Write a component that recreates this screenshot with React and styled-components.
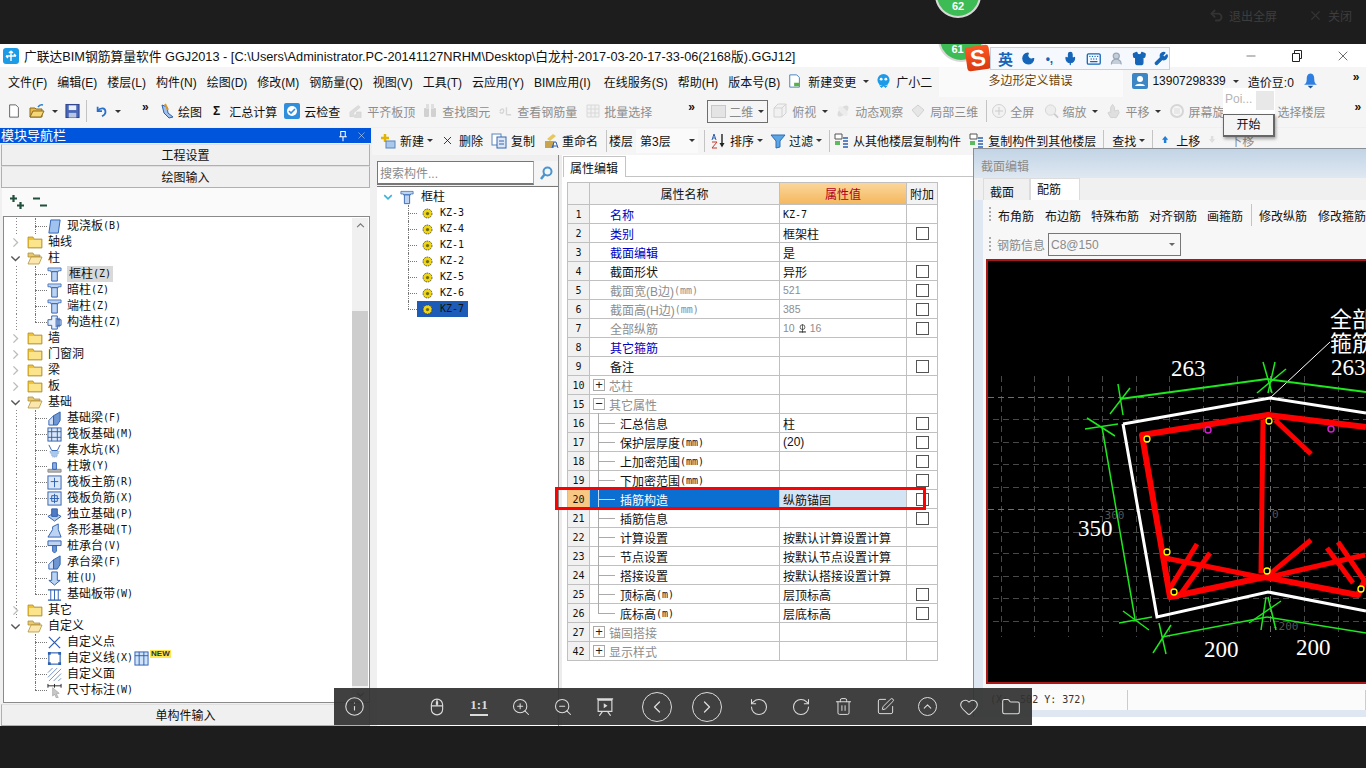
import React from 'react';
import styled, { createGlobalStyle } from 'styled-components';
import {
  Info, ZoomIn, ZoomOut, ChevronLeft, ChevronRight, RotateCcw, RotateCw,
  Trash2, SquarePen, ChevronUp, Heart, Folder as FolderLine, Moon, Mic, Keyboard, Shirt, Wrench,
  Minus, X, Undo2, UserRound,
} from 'lucide-react';

const UI = `"Liberation Sans", "Noto Sans CJK SC", sans-serif`;
const BITMAP = `"DejaVu Sans Mono", "Noto Sans CJK SC", monospace`;

const Global = createGlobalStyle`
  html, body { margin: 0; background: #1d1d1d; overflow: hidden; }
  body { font-family: ${UI}; font-size: 12px; color: #111; }
  * { box-sizing: border-box; }
`;

const Page = styled.div`
  width: 1366px;
  height: 768px;
  display: flex;
  flex-direction: column;
  position: relative;
  overflow: hidden;
`;

const TopBar = styled.div`
  height: 44px;
  flex: none;
  display: flex;
  align-items: center;
  justify-content: flex-end;
  padding: 0 14px 14px 0;
  color: #3d3d3d;
  gap: 5px;
`;

const Ball = styled.div`
  position: absolute;
  left: ${p => p.$x - 23}px;
  top: ${p => p.$y - 23}px;
  width: 46px;
  height: 46px;
  border-radius: 50%;
  background: #3dbb55;
  border: 2px solid #d8d8d8;
  color: #fff;
  font-weight: bold;
  font-size: 11px;
  text-align: center;
  padding-top: ${p => p.$pad}px;
  padding-right: ${p => p.$pr || 0}px;
`;

const Window = styled.div`
  height: 682px;
  flex: none;
  background: #f0f0f0;
  position: relative;
  overflow: hidden;
  display: flex;
  flex-direction: column;
`;

const TitleBar = styled.div`
  height: 23px;
  flex: none;
  background: #fff;
  display: flex;
  align-items: center;
  padding-left: 3px;
  font-size: 12.75px;
  white-space: nowrap;
`;

const TitleText = styled.span`
  margin-left: 5px;
  flex: 1;
`;

const WinBtn = styled.span`
  width: 46px;
  display: flex;
  justify-content: center;
  color: #222;
`;

const Menu = styled.div`
  height: 30px;
  flex: none;
  background: #f5f5f5;
  display: flex;
  align-items: center;
  padding: 0 0 2px 8px;
  white-space: nowrap;
`;

const Bar = styled.div`
  height: ${p => p.$h}px;
  flex: none;
  background: #f5f5f5;
  display: flex;
  align-items: center;
  white-space: nowrap;
  padding-left: ${p => p.$pad || 0}px;
  padding-bottom: ${p => p.$lift || 0}px;
`;

const Item = styled.span`
  display: inline-flex;
  align-items: center;
  flex: none;
  margin-left: ${p => p.$ml || 0}px;
  gap: ${p => p.$gap ?? 4}px;
  color: ${p => (p.$off ? '#8d8d8d' : '#111')};
`;

const Caret = styled.i`
  flex: none;
  width: 0;
  height: 0;
  margin-left: ${p => p.$ml || 0}px;
  margin-right: ${p => p.$mr || 0}px;
  border: 3px solid transparent;
  border-top: 3px solid ${p => p.$c || '#333'};
  border-bottom: 0;
`;

const Sep = styled.i`
  flex: none;
  width: 1px;
  height: 22px;
  background: #c4c4c4;
  margin-left: ${p => p.$ml || 0}px;
`;

const More = styled.b`
  flex: none;
  width: 8px;
  font-size: 12px;
  line-height: 8px;
  margin: -8px 0 0 ${p => p.$ml || 0}px;
`;

const Notice = styled.span`
  width: 184px;
  height: 30px;
  line-height: 28px;
  margin: 0 0 -2px 7px;
  padding-left: 49px;
  background: #fafafa;
  color: #6e4308;
`;

const ModeSelect = styled.span`
  width: 61px;
  height: 23px;
  flex: none;
  margin-left: ${p => p.$ml}px;
  border: 1px solid #6e6e6e;
  display: flex;
  align-items: center;
  padding-left: 3px;
  gap: 3px;
  color: #8a8a8a;
`;

const ModeSwatch = styled.i`
  width: 15px;
  height: 13px;
  background: #e4e4e4;
  border: 1px solid #c8c8c8;
`;

const Body = styled.div`
  flex: 1;
  min-height: 0;
  display: flex;
`;

const Nav = styled.div`
  width: 372px;
  flex: none;
  padding-top: 1px;
  display: flex;
  flex-direction: column;
`;

const NavHead = styled.div`
  height: 15px;
  flex: none;
  background: #0055dd;
  color: #fff;
  font-size: 13px;
  line-height: 14px;
  padding-left: 1px;
  display: flex;
  align-items: center;
  justify-content: space-between;
  padding-right: 4px;
  margin-right: 1px;
`;

const NavHeadTools = styled.span`
  display: flex;
  gap: 7px;
  align-items: center;
  color: #fff;
`;

const NavBtn = styled.div`
  height: 22px;
  flex: none;
  margin: ${p => p.$top || 0}px 2px 0 1px;
  background: #f0f0f0;
  border: 1px solid #b0b0b0;
  border-top-color: #e0e0e0;
  text-align: center;
  line-height: 22px;
`;

const NavTools = styled.div`
  height: 28px;
  flex: none;
  display: flex;
  align-items: center;
  gap: 7px;
  padding-left: 7px;
  background: #fafafa;
  margin: 0 2px;
`;

const NavTreeBox = styled.div`
  flex: 1;
  min-height: 0;
  margin: 0 2px 1px 3px;
  background: #fff;
  border: 1px solid #8a8a8a;
  position: relative;
  padding-top: 1px;
  display: flex;
`;

const TreeList = styled.div`
  flex: 1;
  min-width: 0;
`;

const Scroll = styled.div`
  width: 16px;
  flex: none;
  margin-right: 1px;
  background: linear-gradient(#f0f0f0 93px, #cdcdcd 93px, #cdcdcd 468px, #f0f0f0 468px);
  display: flex;
  flex-direction: column;
  justify-content: space-between;
  align-items: center;
  color: #555;
  padding: 3px 0;
`;

/* tree row: the dotted guides are decoration over the row */
const Row = styled.div`
  height: 16px;
  display: flex;
  align-items: center;
  position: relative;
  padding-left: ${p => p.$indent}px;
  white-space: nowrap;
  ${p => p.$trunk && `
    background: repeating-linear-gradient(#888 0 1px, transparent 1px 3px) 12px 0 / 1px 100% no-repeat;
  `}
  ${p => p.$guide !== undefined && `
    &::before {
      content: '';
      position: absolute;
      left: ${p.$guide}px;
      top: 0;
      height: ${p.$last ? '50%' : '100%'};
      border-left: 1px dotted #777;
    }
    &::after {
      content: '';
      position: absolute;
      left: ${p.$guide}px;
      top: 8px;
      width: ${p.$indent - p.$guide}px;
      border-top: 1px dotted #777;
    }
  `}
`;

const Label = styled.span`
  margin-left: ${p => p.$ml ?? 5}px;
  padding: 0 ${p => (p.$pill ? 2 : 0)}px;
  background: ${p => (p.$pill ? p.$pill : 'none')};
  line-height: 16px;
  display: inline-flex;
  align-items: center;
`;

const Picked = styled.span`
  width: 51px;
  height: 16px;
  padding-left: 4px;
  display: flex;
  align-items: center;
  background: ${p => (p.$on ? '#1c5cb8' : 'none')};
`;

const Code = styled.span`
  font-family: ${BITMAP};
  font-size: 10px;
`;

const Twist = styled.span`
  width: 12px;
  margin-right: 6px;
  display: flex;
  justify-content: center;
  color: #999;
`;

const NewTag = styled.span`
  font-size: 8px;
  font-weight: bold;
  line-height: 8px;
  background: #ffe64d;
  color: #234;
  padding: 0 1px;
  margin: -8px 0 0 1px;
`;

const Main = styled.div`
  flex: 1;
  min-width: 0;
  position: relative;
  padding-top: 1px;
  display: flex;
  flex-direction: column;
`;

const FloorSelect = styled.span`
  width: 62px;
  height: 24px;
  flex: none;
  margin-left: 3px;
  background: #fafafa;
  display: flex;
  align-items: center;
  justify-content: space-between;
  padding: 0 3px 0 4px;
`;

const Panels = styled.div`
  flex: 1;
  min-height: 0;
  display: flex;
  background: #fff;
`;

const ListPane = styled.div`
  width: 187px;
  flex: none;
  background: #f0f0f0;
  border-right: 1px solid #888;
  padding: 6px 0 0 5px;
  display: flex;
  flex-direction: column;
`;

const SearchRow = styled.div`
  height: 24px;
  flex: none;
  display: flex;
`;

const SearchInput = styled.div`
  width: 157px;
  background: #fff;
  border: 1px solid #777;
  border-right-color: #aaa;
  border-bottom-width: 2px;
  color: #8a8a8a;
  padding: 2px 0 0 2px;
`;

const SearchBtn = styled.div`
  flex: 1;
  display: flex;
  align-items: center;
  justify-content: center;
  background: #f5f5f5;
`;

const ListTree = styled.div`
  flex: 1;
  background: #fff;
  margin-top: 1px;
  border-top: 1px solid #777;
  padding-top: 2px;
`;

const PropPane = styled.div`
  flex: 1;
  min-width: 0;
  padding: 1px 0 0 1px;
  border-left: 3px solid #ececec;
  display: flex;
  flex-direction: column;
`;

const TabStrip = styled.div`
  height: 21px;
  flex: none;
  border-bottom: 1px solid #c4c4c4;
  display: flex;
`;

const PropTab = styled.div`
  width: 63px;
  height: 21px;
  background: #fff;
  border: 1px solid #c4c4c4;
  border-bottom: 0;
  padding: 2px 0 0 6px;
`;

const Table = styled.div`
  width: 371px;
  margin: 5px 0 0 4px;
  position: relative;
  display: grid;
  grid-template-columns: 22px 190px 127px 31px;
  grid-template-rows: 22px;
  grid-auto-rows: 19px;
  border-top: 1px solid #c0c0c0;
  border-left: 1px solid #c0c0c0;
`;

const Cell = styled.div`
  position: relative;
  border-right: 1px solid #c0c0c0;
  border-bottom: 1px solid #c0c0c0;
  display: flex;
  align-items: center;
  white-space: nowrap;
  min-width: 0;
`;

const HeadCell = styled(Cell)`
  justify-content: center;
  background: ${p => (p.$hot ? 'linear-gradient(#fbd79b, #f4b75f)' : '#f3f3f3')};
  color: ${p => (p.$hot ? '#b00020' : '#111')};
`;

const IndexCell = styled(Cell)`
  justify-content: center;
  font-family: ${BITMAP};
  font-size: 10px;
  background: ${p => (p.$on ? '#f9c784' : '#f1f1f1')};
`;

const NameCell = styled(Cell)`
  padding-left: ${p => (p.$branch ? 30 : p.$group ? 3 : 20)}px;
  color: ${p => (p.$on ? '#fff' : p.$tone)};
  background: ${p => (p.$on ? '#0a6fd0' : '#fff')};
  ${p => p.$branch && `
    &::before {
      content: '';
      position: absolute;
      left: 8px;
      top: -1px;
      height: ${p.$last ? '10px' : '20px'};
      border-left: 1px solid ${p.$on ? '#bcdcff' : '#aaa'};
    }
    &::after {
      content: '';
      position: absolute;
      left: 8px;
      top: 9px;
      width: 17px;
      border-top: 1px solid ${p.$on ? '#bcdcff' : '#aaa'};
    }
  `}
`;

const ValueCell = styled(Cell)`
  padding-left: 3px;
  background: ${p => (p.$on ? '#d3e5f5' : '#fff')};
  color: ${p => (p.$dim ? '#8d8d8d' : '#111')};
`;

const SmallNum = styled.span`
  font-size: 10.5px;
  display: inline-flex;
  align-items: center;
  gap: 2px;
`;

const AddCell = styled(Cell)`
  justify-content: center;
`;

const Check = styled.i`
  width: 13px;
  height: 13px;
  background: #fff;
  border: 1px solid #555;
`;

const Expander = styled.i`
  width: 12px;
  height: 12px;
  flex: none;
  margin-right: 4px;
  border: 1px solid #aaa;
  font-style: normal;
  line-height: 9px;
  text-align: center;
  font-size: 13px;
  color: #222;
`;

const Highlight = styled.div`
  position: absolute;
  left: -13px;
  top: 304px;
  width: 371px;
  height: 23px;
  border: 3px solid #f00;
  pointer-events: none;
`;

const Editor = styled.div`
  position: absolute;
  left: 601px;
  top: 21px;
  width: 393px;
  height: 569px;
  background: #dfe8f2;
  border: 1px solid #8a8f96;
  border-width: 1px 0 1px 1px;
  display: flex;
  flex-direction: column;
`;

const EditorTitle = styled.div`
  height: 29px;
  flex: none;
  background: linear-gradient(#c2d4e5, #dfe8f2);
  color: #8b8b8b;
  padding: 8px 0 0 7px;
`;

const EditorTabs = styled.div`
  height: 22px;
  flex: none;
  background: #f0f0f0;
  display: flex;
  padding-left: 9px;
`;

const EditorTab = styled.div`
  width: ${p => p.$w}px;
  padding-left: 6px;
  padding-top: ${p => (p.$on ? 1 : 4)}px;
  background: ${p => (p.$on ? '#fff' : '#f0f0f0')};
  border: 1px solid #dcdcdc;
  border-bottom: 0;
`;

const EditorBody = styled.div`
  flex: 1;
  min-height: 0;
  margin-left: 9px;
  background: #f7f7f7;
  display: flex;
  flex-direction: column;
`;

const EditorBar = styled.div`
  height: ${p => p.$h}px;
  flex: none;
  display: flex;
  align-items: center;
  padding-left: ${p => p.$pad}px;
  white-space: nowrap;
`;

const EditorTool = styled.span`
  margin-left: ${p => p.$ml || 0}px;
  color: ${p => (p.$off ? '#8a8a8a' : '#111')};
`;

const Grip = styled.i`
  width: 2px;
  height: 16px;
  flex: none;
  background: repeating-linear-gradient(#aaa 0 2px, transparent 2px 4px);
`;

const RebarSelect = styled.span`
  width: 133px;
  height: 23px;
  margin-left: 3px;
  border: 1px solid #777;
  display: flex;
  align-items: center;
  justify-content: space-between;
  padding: 0 5px 0 2px;
  color: #8a8a8a;
`;

const Canvas = styled.div`
  height: 425px;
  flex: none;
  margin-left: 3px;
  background: #000;
  border: 2px solid #a81818;
  border-right: 0;
  overflow: hidden;
  display: flex;
`;

const StatusBar = styled.div`
  height: 20px;
  flex: none;
  margin: 6px 0 0 3px;
  display: flex;
  background: #fbfbfb;
  font-family: ${BITMAP};
  font-size: 10px;
  line-height: 19px;
  color: #333;
`;

const StatusCell = styled.div`
  width: ${p => p.$w}px;
  padding-left: 4px;
  border-right: 1px solid #ccc;
`;

const EditorFoot = styled.div`
  height: 7px;
  flex: none;
  background: #dfe8f2;
  margin-left: -9px;
`;

const PopTip = styled.div`
  position: absolute;
  left: 1223px;
  top: 44px;
  width: 52px;
  height: 26px;
  background: #fff;
  color: #b5b5b5;
  padding: 4px 0 0 2px;
`;

const PopTipClose = styled.i`
  position: absolute;
  right: 1px;
  top: 3px;
  width: 18px;
  height: 19px;
  background: #e8e8e8;
`;

const PopBtn = styled.div`
  position: absolute;
  left: 1223px;
  top: 70px;
  width: 52px;
  height: 23px;
  background: #f4f4f4;
  border: 1px solid #666;
  border-right-width: 2px;
  border-bottom-width: 2px;
  box-shadow: 1px 2px 3px rgba(0, 0, 0, 0.35);
  text-align: center;
  line-height: 20px;
`;

const Sogou = styled.div`
  position: absolute;
  left: 990px;
  top: 3px;
  width: 180px;
  height: 23px;
  background: #f5f9fd;
  border: 1px solid #c3d2e2;
  display: flex;
  align-items: center;
  gap: 8px;
  padding-left: 7px;
  color: #1565b8;
`;

const SogouLogo = styled.span`
  position: absolute;
  left: 966px;
  top: 2px;
  width: 24px;
  height: 24px;
  background: linear-gradient(#ff5722, #d83a10);
  border-radius: 3px;
  transform: rotate(-8deg);
  color: #fff;
  font: bold 23px/24px "Liberation Sans", sans-serif;
  text-align: center;
`;

const SogouWord = styled.b`
  font-size: 15px;
`;

const SogouPunct = styled.b`
  width: 12px;
  text-align: center;
  line-height: 10px;
`;

const Viewer = styled.div`
  position: absolute;
  left: 334px;
  top: 688px;
  width: 698px;
  height: 37px;
  background: rgba(50, 50, 50, 0.93);
  display: flex;
  align-items: center;
  color: #dcdcdc;
`;

const ViewBtn = styled.span`
  width: ${p => p.$w || 42}px;
  flex: none;
  margin-left: ${p => p.$ml || 0}px;
  display: flex;
  justify-content: center;
  align-items: center;
`;

const Ratio = styled.span`
  font: bold 13px/14px "Liberation Serif", serif;
  border-bottom: 2px solid #dcdcdc;
  padding-bottom: 2px;
`;

const Circle = styled.span`
  width: ${p => p.$d}px;
  height: ${p => p.$d}px;
  border: 1px solid #dcdcdc;
  border-radius: 50%;
  display: flex;
  align-items: center;
  justify-content: center;
`;

/* ---------- icons ---------- */

const Svg = styled.svg`
  flex: none;
  ${p => p.$off && 'filter: grayscale(1) opacity(0.45);'}
`;

const Ico = ({ w = 16, h = 16, off, children }) => (
  <Svg width={w} height={h} viewBox="0 0 16 16" $off={off}>{children}</Svg>
);

const NB = '#2d5fb0';
const LB = '#bcd4f2';

const icons = {
  app: <><rect x="0" y="0" width="16" height="16" rx="3" fill="#1c9be6" /><path d="M8 3v10M3 8h10M8 3l2 2M8 3 6 5M13 8l-2-2M3 8l2 2" stroke="#fff" strokeWidth="1.4" fill="none" /></>,
  file: <path d="M3 1h7l3 3v11H3z" fill="#fff" stroke="#555" />,
  open: <><path d="M1 5h5l1 1h6v8H1z" fill="#e9b949" stroke="#8a6a1f" /><path d="M1 14l3-6h11l-3 6z" fill="#f6d777" stroke="#8a6a1f" /><path d="M9 4q2-3 5-2" stroke="#2d7fd0" strokeWidth="1.5" fill="none" /></>,
  save: <><rect x="1" y="1" width="14" height="14" fill="#4a66b8" stroke="#29408a" /><rect x="4" y="2" width="8" height="5" fill="#e8eefb" /><rect x="4" y="10" width="8" height="5" fill="#b9c4e0" /></>,
  undo: <><path d="M3 3v5h5" fill="none" stroke="#2a6fc9" strokeWidth="2" /><path d="M3 8c3-4 9-4 9 1 0 2-2 4-4 5" fill="none" stroke="#2a6fc9" strokeWidth="2" /></>,
  draw: <><path d="M3 2l5 2 1 6 5 4-4 1-5-5z" fill="#9fc0ee" stroke="#2d5fb0" /><path d="M6 1l3 6" stroke="#d69a2a" strokeWidth="2" /></>,
  cloud: <><rect x="0" y="0" width="16" height="16" rx="2" fill="#2f8fdc" /><circle cx="8" cy="8" r="5" fill="#fff" /><path d="M5 8l2 2 4-4" fill="none" stroke="#2f8fdc" strokeWidth="1.6" /></>,
  level: <path d="M2 14V9l9-7 2 2-7 6v4zM7 15h7V9H9v3H7z" fill="#bdbdbd" stroke="#999" strokeWidth=".5" />,
  bino: <><rect x="2" y="5" width="5" height="9" rx="1" fill="#a5a5a5" /><rect x="9" y="5" width="5" height="9" rx="1" fill="#a5a5a5" /><rect x="4" y="1" width="3" height="5" fill="#c4c4c4" /><rect x="9" y="1" width="3" height="5" fill="#c4c4c4" /></>,
  rebar: <path d="M2 8c2-3 4-3 4 0s-3 3-4 1M9 4v8M9 12h5" fill="none" stroke="#b0b0b0" strokeWidth="1.5" />,
  batch: <><path d="M2 2h12v12H2z" fill="#eee" stroke="#b5b5b5" /><path d="M2 6h12M2 10h12M6 2v12M10 2v12" stroke="#b5b5b5" /></>,
  box3d: <path d="M2 5l4-4h8v9l-4 4H2zM2 5h8v9M10 5l4-4" fill="#ededed" stroke="#a8a8a8" />,
  orbit: <><ellipse cx="8" cy="8" rx="7" ry="3.5" transform="rotate(-45 8 8)" fill="#bdbdbd" /><ellipse cx="8" cy="8" rx="3" ry="6" transform="rotate(-45 8 8)" fill="#e0e0e0" /></>,
  cube: <path d="M8 2l6 5-6 7-6-7z" fill="#d4d4d4" stroke="#a3a3a3" />,
  full: <><circle cx="8" cy="8" r="6.5" fill="#eee" stroke="#a5a5a5" /><path d="M8 4v8M4 8h8" stroke="#999" /></>,
  zoom: <><circle cx="7" cy="7" r="5.5" fill="#e4e4e4" stroke="#ababab" /><path d="M11 11l4 4" stroke="#999" strokeWidth="2" /></>,
  pan: <path d="M7 1l2 3v4l4-1 1 3-3 5H5L2 10l2-1 1 1V4z" fill="#c4c4c4" stroke="#a5a5a5" />,
  rotate: <><circle cx="8" cy="8" r="6" fill="none" stroke="#b0b0b0" strokeWidth="2" /><rect x="5" y="5" width="6" height="6" fill="#d9d9d9" /></>,
  star: <><path d="M5 1v8M1 5h8" stroke="#e2b400" strokeWidth="2.5" /><rect x="6" y="8" width="9" height="7" fill="#a9c8ec" stroke="#5b84b8" /></>,
  copy: <><rect x="1" y="1" width="9" height="11" fill="#fff" stroke="#5b84b8" /><rect x="6" y="4" width="9" height="11" fill="#dbe7f7" stroke="#3766a8" /><path d="M8 8h5M8 11h5" stroke="#3766a8" /></>,
  rename: <><path d="M2 8h9v7H2z" fill="#c9a44d" /><path d="M4 6l6-5 3 2-6 5z" fill="#e8c75f" /><path d="M9 15l2-6 2 0 2 6M10 13h4" fill="none" stroke="#2d5fb0" /></>,
  sort: <><path d="M12 1v12" stroke="#222" strokeWidth="1.4" /><path d="M9.5 10l2.5 4.5 2.500-4.500z" fill="#222" /><path d="M2 7l2-6 2 6M3 5h2" fill="none" stroke="#2d5fb0" /><path d="M2 9h5l-5 6h5" fill="none" stroke="#c0392b" /></>,
  filter: <path d="M1 2h14L10 8v6l-4 1V8z" fill="#5aa5e6" stroke="#2d6eb0" />,
  fromFloor: <><path d="M2 1h7v5H2z" fill="#fff" stroke="#555" /><path d="M2 8h5v4H2z" fill="#5dbb5d" /><path d="M10 5h5M10 8h5M10 11h5M10 14h5" stroke="#2d5fb0" strokeWidth="1.6" /></>,
  up: <path d="M5 0l5 6H7v5H3V6H0z" fill="#1f7fd8" />,
  down: <path d="M3 0h4v5h3l-5 6-5-6h3z" fill="#c4c4c4" />,
  doc: <><path d="M2 1h8l3 3v11H2z" fill="#fff" stroke="#3a76b8" /><path d="M7 10h6v4H7z" fill="#5bb04a" /></>,
  mascot: <><circle cx="8" cy="7" r="6.500" fill="#1e9be8" /><circle cx="5.500" cy="6" r="1.500" fill="#fff" /><circle cx="10.500" cy="6" r="1.500" fill="#fff" /><path d="M4 13l2 2 2-2 2 2 2-2" fill="#1e9be8" stroke="#1e9be8" /></>,
  user: <><rect x="0" y="0" width="16" height="16" rx="2" fill="#3d86c6" /><circle cx="8" cy="6" r="3" fill="#fff" /><path d="M3 13c1-3 9-3 10 0z" fill="#fff" /></>,
  bell: <><path d="M8 0c3 0 4 3 4 6s1 5 3 6H1c2-1 3-3 3-6s1-6 4-6z" fill="#2f7fe0" /><path d="M5 13h6l-3 3z" fill="#1b4f98" /></>,
  folder: <><path d="M1 3h5l1 2h8v9H1z" fill="#f2c230" stroke="#a8872d" strokeWidth=".7" /><rect x="2" y="6" width="12" height="7" fill="#fce48a" /></>,
  folderOpen: <><path d="M1 3h5l1 2h6v2H1z" fill="#e8c870" stroke="#a8872d" strokeWidth=".7" /><path d="M1 14l3-7h11l-3 7z" fill="#fbe7ac" stroke="#a8872d" strokeWidth=".7" /></>,
  column: <><path d="M1 1h14v3h-3v1H4V4H1z" fill={LB} stroke={NB} strokeWidth=".8" /><path d="M5 5h6v10H5z" fill={LB} stroke={NB} /></>,
  slab: <path d="M4 1h10l-2 14H2z" fill="#9fc3ee" stroke={NB} />,
  cross: <><path d="M5 1h6v4h4v6h-4v4H5v-4H1V5h4z" fill="#e8f0fb" stroke={NB} /><path d="M9 3h5v10H9z" fill="#3f6cb8" opacity=".7" /></>,
  beam: <><path d="M2 15V10l5-5v10z" fill="#cfe0f6" stroke={NB} /><path d="M7 5l7-4v9l-3 5H7z" fill="#6f97d2" stroke={NB} /></>,
  raft: <><rect x="1" y="1" width="14" height="14" fill="#dbe7f7" stroke={NB} /><path d="M5 1v14M11 1v14M1 5h14M1 11h14" stroke={NB} /></>,
  pit: <><path d="M2 2l3 6h6l3-6" fill="none" stroke={NB} /><path d="M3 9h10l-3 6H6z" fill="#a9c8ec" stroke="#7fa3d4" strokeDasharray="1 1" /></>,
  pier: <><path d="M1 11h14v3H1z" fill="#b8b8b8" stroke="#888" /><path d="M6 4h4v7H6z" fill="#8fb1e3" stroke={NB} /></>,
  main: <><rect x="1" y="1" width="14" height="14" fill="#dbe7f7" stroke={NB} /><path d="M8 3v10M4 7h8" stroke={NB} /></>,
  neg: <><rect x="1" y="1" width="14" height="14" fill="#dbe7f7" stroke={NB} /><path d="M8 3v10M3 8h10M5 5h6v6H5z" fill="none" stroke={NB} /></>,
  isolated: <><path d="M1 10l7-4 7 4-7 5z" fill="#b8cdea" stroke={NB} /><path d="M5 2h6v8H5z" fill="#4f7cc4" stroke={NB} /></>,
  strip: <path d="M1 15l5-8V4l6-3v6l3 8z" fill="#bcd4f2" stroke={NB} />,
  cap: <><path d="M1 2h14v5H1z" fill="#bcd4f2" stroke={NB} /><path d="M6 7h4v6l-2 2-2-2z" fill="#6f97d2" stroke={NB} /></>,
  pile: <><path d="M5 1h6v9h3l-6 5-6-5h3z" fill="#bcd4f2" stroke={NB} /></>,
  band: <><path d="M1 3h14M1 14h14" stroke={NB} strokeWidth="1.4" /><path d="M4 3v11M8 3v11M12 3v11" stroke={NB} /></>,
  point: <path d="M2 2l12 12M14 2 2 14" stroke={NB} strokeWidth="1.4" />,
  line: <><rect x="2" y="2" width="12" height="12" fill="none" stroke={NB} strokeWidth="1.2" /><path d="M1 1h3v3H1zM12 1h3v3h-3zM1 12h3v3H1zM12 12h3v3h-3z" fill={NB} /></>,
  face: <path d="M1 6l5-5M1 11 11 1M2 15 15 2M7 15l8-8M12 15l3-3" stroke="#6f8fbf" />,
  dim: <><path d="M1 3h14M1 1v4M8 1v4M15 1v4" stroke="#222" /><path d="M6 5l7 6-3 .5 2 4-2 .5-2-4-2 2z" fill="#c8c8c8" stroke="#888" strokeWidth=".5" /></>,
  gear: <><circle cx="8" cy="8" r="5.500" fill="#f1d60f" stroke="#3c3c3c" strokeDasharray="2 1" /><circle cx="8" cy="8" r="2" fill="#6b6b14" /></>,
  newCol: <><rect x="1" y="1" width="14" height="14" fill="#cfe3fa" stroke={NB} /><path d="M5.500 1v14M10.500 1v14M1 5h14" stroke={NB} /></>,
  expand: <path d="M4.500 1v7M1 4.500h7M11.500 8v7M8 11.500h7" stroke="#21503d" strokeWidth="2.200" />,
  collapse: <path d="M1 4.500h7M8 11.500h7" stroke="#21503d" strokeWidth="2.200" />,
  pin: <path d="M5 2h6v7H5zM3 9h10M8 9v6" fill="none" stroke="#fff" strokeWidth="1.4" />,
  search: <><circle cx="9.500" cy="6.500" r="4" fill="none" stroke="#4b94cf" strokeWidth="2" /><path d="M6.500 9.500 3 14" stroke="#4b94cf" strokeWidth="2.500" /></>,
  chevR: <path d="M5 2l6 6-6 6" fill="none" stroke="#bbb" strokeWidth="2" />,
  chevD: <path d="M2 5l6 6 6-6" fill="none" stroke="#555" strokeWidth="2" />,
  chevDCy: <path d="M2 5l6 6 6-6" fill="none" stroke="#38b3d9" strokeWidth="2.500" />,
  chevU: <path d="M2 11l6-6 6 6" fill="none" stroke="#777" strokeWidth="2" />,
  mouse: <><rect x="3" y="1" width="10" height="14" rx="5" fill="none" stroke="#dcdcdc" /><path d="M3 7h10M8 1v6" stroke="#dcdcdc" /><rect x="7" y="3" width="2" height="3" fill="#dcdcdc" /></>,
  board: <><path d="M2.500 2.500h11v9h-11zM1.500 1.500h13" fill="none" stroke="#dcdcdc" strokeWidth=".9" /><path d="M7 5v4l3-2z" fill="#dcdcdc" /><path d="M6 11.500 3.500 15M10 11.500l2.500 3.500" stroke="#dcdcdc" /></>,
  bar: <><path d="M8 2v12" stroke="#222" /><circle cx="8" cy="6" r="3.500" fill="none" stroke="#222" /><path d="M3 13h10" stroke="#222" strokeWidth="1.500" /></>,
};

const Icon = ({ n, w, h, off }) => <Ico w={w} h={h} off={off}>{icons[n]}</Ico>;

const Tool = ({ ml, icon, iw = 16, gap, off, children }) => (
  <Item $ml={ml} $gap={gap} $off={off}>
    {icon && <Icon n={icon} w={iw} h={16} off={off} />}
    {children}
  </Item>
);

/* ---------- data ---------- */

const navTree = [
  { t: 'c', i: 'slab', l: '现浇板', c: '(B)', trunk: 1 },
  { t: 'f', l: '轴线' },
  { t: 'o', l: '柱' },
  { t: 'c', i: 'column', l: '框柱', c: '(Z)', trunk: 1, on: 1 },
  { t: 'c', i: 'column', l: '暗柱', c: '(Z)', trunk: 1 },
  { t: 'c', i: 'column', l: '端柱', c: '(Z)', trunk: 1 },
  { t: 'c', i: 'cross', l: '构造柱', c: '(Z)', trunk: 1, last: 1 },
  { t: 'f', l: '墙' },
  { t: 'f', l: '门窗洞' },
  { t: 'f', l: '梁' },
  { t: 'f', l: '板' },
  { t: 'o', l: '基础' },
  { t: 'c', i: 'beam', l: '基础梁', c: '(F)', trunk: 1 },
  { t: 'c', i: 'raft', l: '筏板基础', c: '(M)', trunk: 1 },
  { t: 'c', i: 'pit', l: '集水坑', c: '(K)', trunk: 1 },
  { t: 'c', i: 'pier', l: '柱墩', c: '(Y)', trunk: 1 },
  { t: 'c', i: 'main', l: '筏板主筋', c: '(R)', trunk: 1 },
  { t: 'c', i: 'neg', l: '筏板负筋', c: '(X)', trunk: 1 },
  { t: 'c', i: 'isolated', l: '独立基础', c: '(P)', trunk: 1 },
  { t: 'c', i: 'strip', l: '条形基础', c: '(T)', trunk: 1 },
  { t: 'c', i: 'cap', l: '桩承台', c: '(V)', trunk: 1 },
  { t: 'c', i: 'beam', l: '承台梁', c: '(F)', trunk: 1 },
  { t: 'c', i: 'pile', l: '桩', c: '(U)', trunk: 1 },
  { t: 'c', i: 'band', l: '基础板带', c: '(W)', trunk: 1, last: 1 },
  { t: 'f', l: '其它' },
  { t: 'o', l: '自定义' },
  { t: 'c', i: 'point', l: '自定义点' },
  { t: 'c', i: 'line', l: '自定义线', c: '(X)', extra: 1 },
  { t: 'c', i: 'face', l: '自定义面' },
  { t: 'c', i: 'dim', l: '尺寸标注', c: '(W)', last: 1 },
];

const BLUE = '#0000c0';
const GRAY = '#8d8d8d';

const rows = [
  { n: 1, l: '名称', tone: BLUE, v: <Code>KZ-7</Code> },
  { n: 2, l: '类别', tone: BLUE, v: '框架柱', ck: 1 },
  { n: 3, l: '截面编辑', tone: BLUE, v: '是' },
  { n: 4, l: '截面形状', v: '异形', ck: 1 },
  { n: 5, l: '截面宽(B边)', u: '(mm)', tone: GRAY, v: <SmallNum>521</SmallNum>, dim: 1, ck: 1 },
  { n: 6, l: '截面高(H边)', u: '(mm)', tone: GRAY, v: <SmallNum>385</SmallNum>, dim: 1, ck: 1 },
  { n: 7, l: '全部纵筋', tone: GRAY, v: <SmallNum>10<Icon n="bar" w={11} h={11} />16</SmallNum>, dim: 1, ck: 1 },
  { n: 8, l: '其它箍筋', tone: BLUE },
  { n: 9, l: '备注', ck: 1 },
  { n: 10, l: '芯柱', tone: GRAY, group: '+' },
  { n: 15, l: '其它属性', tone: GRAY, group: '−' },
  { n: 16, l: '汇总信息', b: 1, v: '柱', ck: 1 },
  { n: 17, l: '保护层厚度', u: '(mm)', b: 1, v: '(20)', ck: 1 },
  { n: 18, l: '上加密范围', u: '(mm)', b: 1, ck: 1 },
  { n: 19, l: '下加密范围', u: '(mm)', b: 1, ck: 1 },
  { n: 20, l: '插筋构造', b: 1, v: '纵筋锚固', ck: 1, on: 1 },
  { n: 21, l: '插筋信息', b: 1, ck: 1 },
  { n: 22, l: '计算设置', b: 1, v: '按默认计算设置计算' },
  { n: 23, l: '节点设置', b: 1, v: '按默认节点设置计算' },
  { n: 24, l: '搭接设置', b: 1, v: '按默认搭接设置计算' },
  { n: 25, l: '顶标高', u: '(m)', b: 1, v: '层顶标高', ck: 1 },
  { n: 26, l: '底标高', u: '(m)', b: 1, v: '层底标高', ck: 1, last: 1 },
  { n: 27, l: '锚固搭接', tone: GRAY, group: '+' },
  { n: 42, l: '显示样式', tone: GRAY, group: '+' },
];

const menus = ['文件(F)', '编辑(E)', '楼层(L)', '构件(N)', '绘图(D)', '修改(M)', '钢筋量(Q)', '视图(V)', '工具(T)', '云应用(Y)', 'BIM应用(I)', '在线服务(S)', '帮助(H)', '版本号(B)'];

/* ---------- section drawing, in page coordinates ---------- */

const gridX = [1001, 1034, 1068, 1102, 1136, 1169, 1203, 1237, 1270, 1304, 1338];
const gridY = [397, 419, 442, 464, 487, 509, 532, 553, 576, 598, 621];

const greens = [
  [1120, 399, 1267, 379], [1267, 379, 1366, 392], [1102, 427, 1135, 619], [1162, 637, 1267, 617], [1267, 617, 1366, 633],
  [1118, 384, 1123, 415], [1130, 388, 1110, 414],
  [1263, 362, 1272, 393], [1275, 362, 1268, 393], [1286, 369, 1257, 393],
  [1087, 418, 1115, 436], [1085, 429, 1118, 424],
  [1123, 611, 1149, 630], [1119, 623, 1152, 617],
  [1159, 623, 1166, 654], [1171, 625, 1153, 653],
  [1266, 597, 1261, 630], [1268, 597, 1276, 630], [1281, 601, 1249, 623],
];

const reds = [
  [1265, 578, 1365, 555], [1165, 558, 1265, 578], [1263, 420, 1261, 573],
  [1275, 420, 1311, 454], [1197, 544, 1169, 590], [1210, 553, 1180, 595],
  [1311, 540, 1265, 578], [1327, 548, 1353, 583], [1338, 542, 1366, 583],
];

const SectionDrawing = () => (
  <svg width="378" height="421" viewBox="988 261 378 421">
    {gridX.map(x => (
      <line key={x} x1={x + 0.5} x2={x + 0.5} y1="376" y2="637" stroke={x === 1270 ? '#6e6e6e' : '#484848'} strokeDasharray="6 4" />
    ))}
    {gridY.map(y => (
      <line key={y} y1={y + 0.5} y2={y + 0.5} x1={y === 397 || y === 509 ? 988 : 993} x2="1366" stroke={y === 397 || y === 509 ? '#6e6e6e' : '#484848'} strokeDasharray="6 4" />
    ))}
    <text x="1098" y="519" fill="#555" fontSize="11" fontFamily="DejaVu Sans Mono">-300</text>
    <text x="1272" y="518" fill="#555" fontSize="11" fontFamily="DejaVu Sans Mono">0</text>
    <text x="1272" y="630" fill="#555" fontSize="11" fontFamily="DejaVu Sans Mono">-200</text>
    <path d="M1123 424 1270 398 1366 413M1123 424 1157 617 1268 592 1366 611" fill="none" stroke="#fff" strokeWidth="3" />
    <line x1="1270" y1="398" x2="1330" y2="342" stroke="#fff" />
    {greens.map((g, i) => (
      <line key={i} x1={g[0]} y1={g[1]} x2={g[2]} y2={g[3]} stroke="#1ee81e" strokeWidth={i < 2 ? 2 : 1.5} />
    ))}
    <path d="M1366 427 1268 415 1142 435 1170 597 1265 577 1358 595 1366 578" fill="none" stroke="#f00" strokeWidth="6" strokeLinejoin="round" />
    {reds.map((r, i) => (
      <line key={i} x1={r[0]} y1={r[1]} x2={r[2]} y2={r[3]} stroke="#f00" strokeWidth="5" />
    ))}
    {[[1147, 439], [1269, 421], [1167, 552], [1174, 592], [1267, 571], [1361, 589]].map(([x, y]) => (
      <circle key={x} cx={x} cy={y} r="3" fill="#000" stroke="#ff0" strokeWidth="1.300" />
    ))}
    {[[1208, 430], [1331, 429]].map(([x, y]) => (
      <circle key={x} cx={x} cy={y} r="3" fill="#000" stroke="#d020d0" strokeWidth="1.500" />
    ))}
    <g fill="#fff" fontSize="23" fontFamily="Liberation Serif">
      <text x="1171" y="376">263</text>
      <text x="1331" y="375">263</text>
      <text x="1078" y="536">350</text>
      <text x="1204" y="657">200</text>
      <text x="1296" y="655">200</text>
    </g>
    <g fill="#fff" fontSize="22" fontFamily="Noto Sans CJK SC">
      <text x="1330" y="327">全部</text>
      <text x="1330" y="351">箍筋</text>
    </g>
  </svg>
);

const Name = ({ l, c }) => (
  <>
    {l}
    {c && <Code>{c}</Code>}
  </>
);

const NavRow = ({ r }) => {
  if (r.t !== 'c') {
    return (
      <Row $indent={5} $trunk={r.l === '其它'}>
        <Twist><Icon n={r.t === 'o' ? 'chevD' : 'chevR'} w={11} h={11} /></Twist>
        <Icon n={r.t === 'o' ? 'folderOpen' : 'folder'} w={16} h={16} />
        <Label $ml={5}>{r.l}</Label>
      </Row>
    );
  }
  return (
    <Row $indent={43} $guide={31} $last={r.last} $trunk={r.trunk}>
      <Icon n={r.i} w={15} h={15} />
      <Label $pill={r.on ? '#d9d9d9' : null}>
        <Name l={r.l} c={r.c} />
      </Label>
      {r.extra && (
        <>
          <Label $ml={1}><Icon n="newCol" w={15} h={15} /></Label>
          <NewTag>NEW</NewTag>
        </>
      )}
    </Row>
  );
};

export default function App() {
  return (
    <Page>
      <Global />
      <TopBar>
        <Undo2 size={15} color="#333" strokeWidth={3} />
        <span>退出全屏</span>
        <X size={15} color="#333" style={{ marginLeft: 26 }} />
        <span>关闭</span>
      </TopBar>
      <Ball $x={958} $y={-5} $pad={26}>62</Ball>

      <Window>
        <TitleBar>
          <Icon n="app" w={16} h={16} />
          <TitleText>广联达BIM钢筋算量软件 GGJ2013 - [C:\Users\Administrator.PC-20141127NRHM\Desktop\白龙村-2017-03-20-17-33-06(2168版).GGJ12]</TitleText>
          <WinBtn><Minus size={14} strokeWidth={1} /></WinBtn>
          <WinBtn><svg width="12" height="12" viewBox="0 0 12 12"><path d="M1.500 3.500h7v8h-7zM3.500 3.500v-3h7v8h-2" fill="none" stroke="#222" /></svg></WinBtn>
          <WinBtn><X size={16} strokeWidth={1} /></WinBtn>
        </TitleBar>

        <Menu>
          {menus.map((m, i) => <Item key={m} $ml={i === 0 ? 0 : i === 11 ? 13 : 10}>{m}</Item>)}
          <Tool ml={8} icon="doc" iw={14} gap={6}>新建变更</Tool>
          <Caret $ml={7} />
          <Tool ml={7} icon="mascot" iw={15} gap={5}>广小二</Tool>
          <Notice>多边形定义错误</Notice>
          <Tool ml={9} icon="user" gap={4}>13907298339</Tool>
          <Caret $ml={7} />
          <Item $ml={9}>造价豆:0</Item>
          <Item $ml={9}><Icon n="bell" w={15} h={16} /></Item>
          <More $ml={35}>»</More>
        </Menu>

        <Bar $h={30} $pad={7} $lift={2}>
          <Icon n="file" w={14} />
          <Tool ml={8} icon="open" />
          <Caret $ml={7} />
          <Tool ml={7} icon="save" iw={15} />
          <Sep $ml={6} />
          <Tool ml={8} icon="undo" iw={14} />
          <Caret $ml={6} />
          <More $ml={21}>»</More>
          <Tool ml={9} icon="draw" gap={3}>绘图</Tool>
          <Item $ml={11}><b>Σ</b></Item>
          <Item $ml={9}>汇总计算</Item>
          <Tool ml={7} icon="cloud">云检查</Tool>
          <Tool ml={8} icon="level" iw={15} off>平齐板顶</Tool>
          <Tool ml={7} icon="bino" off>查找图元</Tool>
          <Tool ml={8} icon="rebar" iw={15} off>查看钢筋量</Tool>
          <Tool ml={8} icon="batch" gap={3} off>批量选择</Tool>
          <More $ml={36}>»</More>
          <ModeSelect $ml={11}>
            <ModeSwatch />
            二维
            <Caret $ml={2} />
          </ModeSelect>
          <Tool ml={4} icon="box3d" off>俯视</Tool>
          <Caret $ml={6} />
          <Tool ml={7} icon="orbit" off>动态观察</Tool>
          <Tool ml={7} icon="cube" off>局部三维</Tool>
          <Sep $ml={8} />
          <Tool ml={4} icon="full" gap={3} off>全屏</Tool>
          <Tool ml={10} icon="zoom" iw={15} gap={3} off>缩放</Tool>
          <Caret $ml={6} />
          <Tool ml={8} icon="pan" iw={15} off>平移</Tool>
          <Caret $ml={6} />
          <Tool ml={8} icon="rotate" gap={3} off>屏幕旋转</Tool>
          <Item $ml={41} $off>选择楼层</Item>
          <More $ml={29}>»</More>
        </Bar>

        <Body>
          <Nav>
            <NavHead>
              模块导航栏
              <NavHeadTools>
                <Icon n="pin" w={12} h={12} />
                <X size={11} strokeWidth={1} />
              </NavHeadTools>
            </NavHead>
            <NavBtn $top={1}>工程设置</NavBtn>
            <NavBtn>绘图输入</NavBtn>
            <NavTools>
              <Icon n="expand" />
              <Icon n="collapse" />
            </NavTools>
            <NavTreeBox>
              <TreeList>
                {navTree.map(r => <NavRow key={r.l + (r.c || '')} r={r} />)}
              </TreeList>
              <Scroll>
                <Icon n="chevU" w={9} h={9} />
                <Icon n="chevD" w={9} h={9} />
              </Scroll>
            </NavTreeBox>
            <NavBtn>单构件输入</NavBtn>
          </Nav>

          <Main>
            <Bar $h={27} $pad={8} $lift={2}>
              <Tool icon="star">新建</Tool>
              <Caret $ml={3} />
              <Tool ml={8} icon={null} gap={5}>
                <X size={13} strokeWidth={1.500} />
                删除
              </Tool>
              <Tool ml={8} icon="copy">复制</Tool>
              <Tool ml={8} icon="rename" gap={3}>重命名</Tool>
              <Sep $ml={8} />
              <Item $ml={2}>楼层</Item>
              <FloorSelect>
                第3层
                <Caret />
              </FloorSelect>
              <Sep $ml={6} />
              <Tool ml={5} icon="sort">排序</Tool>
              <Caret $ml={3} />
              <Tool ml={7} icon="filter" gap={3}>过滤</Tool>
              <Caret $ml={3} />
              <Sep $ml={7} />
              <Tool ml={3} icon="fromFloor">从其他楼层复制构件</Tool>
              <Tool ml={7} icon="fromFloor">复制构件到其他楼层</Tool>
              <Sep $ml={7} />
              <Item $ml={8}>查找</Item>
              <Caret $ml={3} />
              <Sep $ml={7} />
              <Tool ml={9} icon="up" iw={10} gap={4}>上移</Tool>
              <Tool ml={9} icon="down" iw={10} gap={11} off>下移</Tool>
            </Bar>

            <Panels>
              <ListPane>
                <SearchRow>
                  <SearchInput>搜索构件...</SearchInput>
                  <SearchBtn><Icon n="search" /></SearchBtn>
                </SearchRow>
                <ListTree>
                  <Row $indent={6}>
                    <Icon n="chevDCy" w={10} h={10} />
                    <Label $ml={7}><Icon n="column" w={14} h={15} /></Label>
                    <Label $ml={7}>框柱</Label>
                  </Row>
                  {['KZ-3', 'KZ-4', 'KZ-1', 'KZ-2', 'KZ-5', 'KZ-6', 'KZ-7'].map(k => (
                    <Row key={k} $indent={40} $guide={31} $last={k === 'KZ-7'}>
                      <Picked $on={k === 'KZ-7'}>
                        <Icon n="gear" w={13} h={13} />
                        <Label $ml={6}><Code>{k}</Code></Label>
                      </Picked>
                    </Row>
                  ))}
                </ListTree>
              </ListPane>

              <PropPane>
                <TabStrip><PropTab>属性编辑</PropTab></TabStrip>
                <Table>
                  <HeadCell />
                  <HeadCell>属性名称</HeadCell>
                  <HeadCell $hot>属性值</HeadCell>
                  <HeadCell>附加</HeadCell>
                  {rows.map(r => (
                    <React.Fragment key={r.n}>
                      <IndexCell $on={r.on}>{r.n}</IndexCell>
                      <NameCell $tone={r.tone || '#111'} $branch={r.b} $group={r.group} $on={r.on} $last={r.last}>
                        {r.group && <Expander>{r.group}</Expander>}
                        {r.l}
                        {r.u && <Code>{r.u}</Code>}
                      </NameCell>
                      <ValueCell $on={r.on} $dim={r.dim}>{r.v}</ValueCell>
                      <AddCell>{r.ck && <Check />}</AddCell>
                    </React.Fragment>
                  ))}
                  <Highlight />
                </Table>
              </PropPane>
            </Panels>

            <Editor>
              <EditorTitle>截面编辑</EditorTitle>
              <EditorTabs>
                <EditorTab $w={47}>截面</EditorTab>
                <EditorTab $w={50} $on>配筋</EditorTab>
              </EditorTabs>
              <EditorBody>
                <EditorBar $h={30} $pad={6}>
                  <Grip />
                  <EditorTool $ml={7}>布角筋</EditorTool>
                  <EditorTool $ml={11}>布边筋</EditorTool>
                  <EditorTool $ml={10}>特殊布筋</EditorTool>
                  <EditorTool $ml={10}>对齐钢筋</EditorTool>
                  <EditorTool $ml={10}>画箍筋</EditorTool>
                  <Sep $ml={8} />
                  <EditorTool $ml={7}>修改纵筋</EditorTool>
                  <EditorTool $ml={11}>修改箍筋</EditorTool>
                </EditorBar>
                <EditorBar $h={29} $pad={6}>
                  <Grip />
                  <EditorTool $ml={6} $off>钢筋信息</EditorTool>
                  <RebarSelect>
                    C8@150
                    <Caret $c="#666" />
                  </RebarSelect>
                </EditorBar>
                <Canvas><SectionDrawing /></Canvas>
                <StatusBar>
                  <StatusCell $w={143}>(X: -502 Y: 372)</StatusCell>
                  <StatusCell $w={240} />
                </StatusBar>
                <EditorFoot />
              </EditorBody>
            </Editor>
          </Main>
        </Body>

        <Ball $x={961} $y={-5} $pad={25} $pr={7}>61</Ball>
        <SogouLogo>S</SogouLogo>
        <Sogou>
          <SogouWord>英</SogouWord>
          <Moon size={15} fill="#1565b8" />
          <SogouPunct>•,</SogouPunct>
          <Mic size={15} fill="#1565b8" />
          <Keyboard size={16} />
          <UserRound size={15} color="#9aa8b8" fill="#c5ced8" />
          <Shirt size={15} fill="#1565b8" />
          <Wrench size={15} fill="#1565b8" />
        </Sogou>
        <PopTip>Poi...<PopTipClose /></PopTip>
        <PopBtn>开始</PopBtn>
      </Window>

      <Viewer>
        <ViewBtn $w={40}><Info size={21} strokeWidth={1.25} /></ViewBtn>
        <ViewBtn $ml={42}><Icon n="mouse" w={18} h={22} /></ViewBtn>
        <ViewBtn><Ratio>1:1</Ratio></ViewBtn>
        <ViewBtn><ZoomIn size={20} strokeWidth={1.25} /></ViewBtn>
        <ViewBtn><ZoomOut size={20} strokeWidth={1.25} /></ViewBtn>
        <ViewBtn><Icon n="board" w={20} h={20} /></ViewBtn>
        <ViewBtn $w={50} $ml={6}><Circle $d={30}><ChevronLeft size={20} strokeWidth={1.5} /></Circle></ViewBtn>
        <ViewBtn $w={50}><Circle $d={30}><ChevronRight size={20} strokeWidth={1.5} /></Circle></ViewBtn>
        <ViewBtn $ml={6}><RotateCcw size={20} strokeWidth={1.25} /></ViewBtn>
        <ViewBtn><RotateCw size={20} strokeWidth={1.25} /></ViewBtn>
        <ViewBtn><Trash2 size={19} strokeWidth={1.25} /></ViewBtn>
        <ViewBtn><SquarePen size={19} strokeWidth={1.25} /></ViewBtn>
        <ViewBtn><Circle $d={19}><ChevronUp size={13} strokeWidth={2} /></Circle></ViewBtn>
        <ViewBtn><Heart size={20} strokeWidth={1.25} /></ViewBtn>
        <ViewBtn><FolderLine size={20} strokeWidth={1.25} /></ViewBtn>
      </Viewer>
    </Page>
  );
}
